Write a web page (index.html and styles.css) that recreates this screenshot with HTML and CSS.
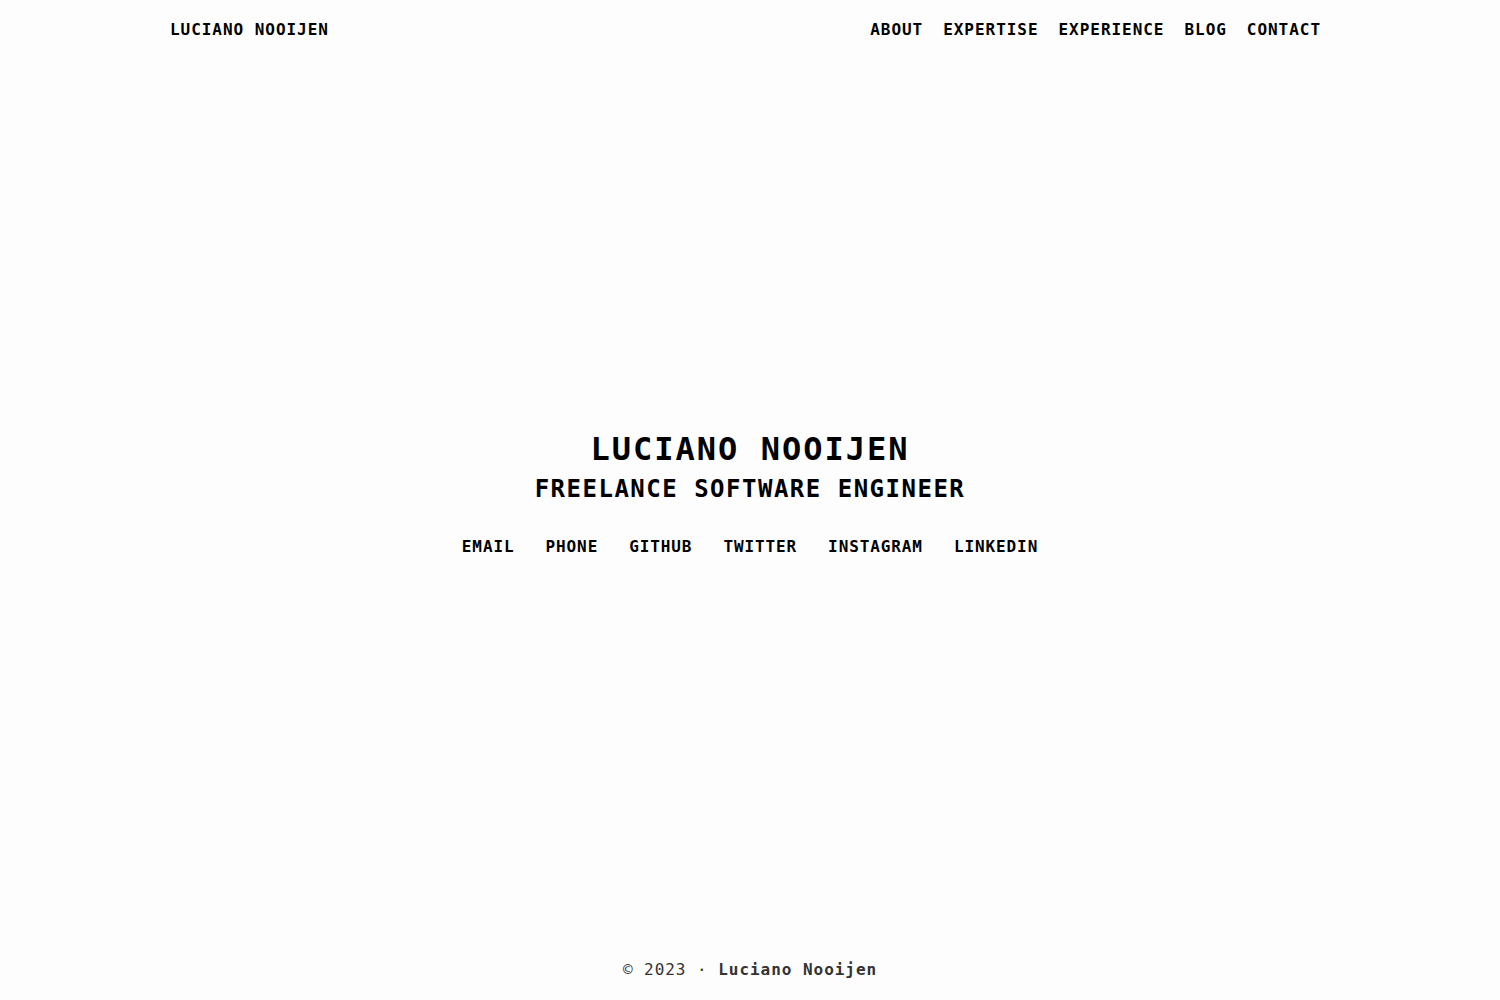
FILE: index.html
```html
<!DOCTYPE html>
<html lang="en">
<head>
<meta charset="utf-8">
<title>Luciano Nooijen</title>
<link rel="stylesheet" href="styles.css">
</head>
<body>
<div class="page">
  <header class="header">
    <a class="brand" href="#">Luciano Nooijen</a>
    <nav class="nav">
      <a href="#">About</a>
      <a href="#">Expertise</a>
      <a href="#">Experience</a>
      <a href="#">Blog</a>
      <a href="#">Contact</a>
    </nav>
  </header>
  <main class="hero">
    <h1 class="title">Luciano Nooijen</h1>
    <h2 class="subtitle">Freelance Software Engineer</h2>
    <ul class="links">
      <li><a href="#">Email</a></li>
      <li><a href="#">Phone</a></li>
      <li><a href="#">GitHub</a></li>
      <li><a href="#">Twitter</a></li>
      <li><a href="#">Instagram</a></li>
      <li><a href="#">LinkedIn</a></li>
    </ul>
  </main>
  <footer class="footer">
    © 2023 · <strong>Luciano Nooijen</strong>
  </footer>
</div>
</body>
</html>
```

FILE: styles.css
```css
html, body {
  margin: 0;
  padding: 0;
}
body {
  background: #fdfdfd;
  color: #000;
  font-family: "DejaVu Sans Mono", "Liberation Mono", monospace;
}
a {
  color: inherit;
  text-decoration: none;
}
.page {
  min-height: 100vh;
  display: flex;
  flex-direction: column;
}
.header {
  display: flex;
  justify-content: space-between;
  align-items: center;
  padding: 19px 179px 0 170px;
  font-size: 16px;
  font-weight: bold;
  text-transform: uppercase;
  letter-spacing: 0.06em;
  line-height: 22px;
}
.nav {
  display: flex;
  gap: 20px;
}
.hero {
  flex: 1;
  display: flex;
  flex-direction: column;
  align-items: center;
  justify-content: center;
  padding-bottom: 13px;
  text-transform: uppercase;
  font-weight: bold;
}
.title {
  margin: 0 0 4px;
  font-size: 32px;
  line-height: 40px;
  letter-spacing: 2px;
}
.subtitle {
  margin: 0;
  font-size: 24px;
  line-height: 32px;
  letter-spacing: 1.5px;
}
.links {
  list-style: none;
  margin: 31px 0 0;
  padding: 0;
  display: flex;
  gap: 31px;
  font-size: 16px;
  line-height: 22px;
  letter-spacing: 0.9px;
}
.footer {
  text-align: center;
  padding-bottom: 19px;
  font-size: 16px;
  line-height: 22px;
  letter-spacing: 0.06em;
  color: #333;
}
.footer strong {
  font-weight: bold;
}
```
